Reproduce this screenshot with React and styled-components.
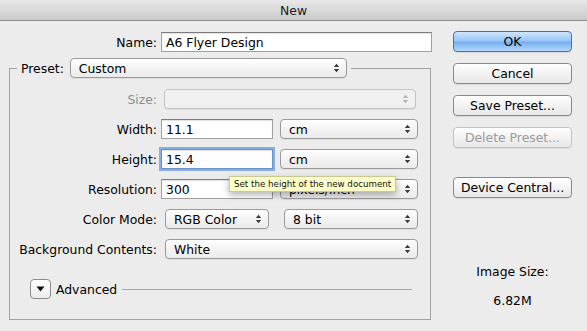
import React from 'react';
import styled, { createGlobalStyle, css } from 'styled-components';

const GlobalStyle = createGlobalStyle`
  html, body {
    margin: 0;
    padding: 0;
    background: #ececec;
  }
  body {
    font-family: "DejaVu Sans", "Liberation Sans", sans-serif;
    font-size: 12.4px;
    color: #000;
  }
`;

const Window = styled.div`
  width: 587px;
  height: 331px;
  background: #ececec;
  display: flex;
  flex-direction: column;
  overflow: hidden;
`;

const TitleBar = styled.div`
  flex: 0 0 20px;
  background: linear-gradient(#e8e8e8, #cacaca);
  border-bottom: 1px solid #8e8e8e;
  display: flex;
  align-items: center;
  justify-content: center;
  color: #1c1c1c;
`;

const Body = styled.div`
  display: flex;
  gap: 22px;
  padding: 10px 15px 0 9px;
`;

const FormColumn = styled.div`
  width: 422px;
  display: flex;
  flex-direction: column;
`;

const Row = styled.div`
  position: relative;
  display: grid;
  grid-template-columns: ${p => p.labelWidth || 147}px 1fr;
  column-gap: 4px;
  align-items: center;
  height: 20px;
  margin-top: ${p => p.top || 0}px;
`;

const Label = styled.span`
  text-align: right;
  white-space: nowrap;
  color: ${p => (p.disabled ? '#8e8e8e' : '#000')};
`;

const Controls = styled.div`
  display: flex;
  align-items: center;
  height: 20px;
`;

const TextField = styled.div`
  box-sizing: border-box;
  height: 20px;
  width: ${p => (p.width ? `${p.width}px` : 'auto')};
  flex: ${p => (p.width ? '0 0 auto' : '1')};
  background: #fff;
  border: 1px solid #a0a0a0;
  border-top-color: #7c7c7c;
  box-shadow: inset 0 1px 1px rgba(0, 0, 0, 0.12);
  padding: 0 4px;
  display: flex;
  align-items: center;
  white-space: nowrap;
  ${p =>
    p.focused &&
    css`
      border-color: #6f90c4;
      box-shadow: 0 0 0 2px #83aee6, inset 0 1px 1px rgba(0, 0, 0, 0.12);
    `}
`;

const PopUp = styled.div`
  box-sizing: border-box;
  height: 20px;
  width: ${p => (p.width ? `${p.width}px` : 'auto')};
  flex: ${p => (p.width ? '0 0 auto' : '1')};
  margin-left: ${p => p.left || 0}px;
  margin-right: ${p => p.right || 0}px;
  border: 1px solid ${p => (p.disabled ? '#c4c4c4' : '#9a9a9a')};
  border-radius: 4px;
  background: ${p =>
    p.disabled ? '#f0f0f0' : 'linear-gradient(#ffffff, #f3f3f3 50%, #ebebeb)'};
  box-shadow: 0 1px 0 rgba(0, 0, 0, 0.06);
  display: flex;
  align-items: center;
  justify-content: space-between;
  padding: 0 6px 0 8px;
  white-space: nowrap;
  overflow: hidden;
`;

const Arrows = ({ disabled }) => (
  <svg width="7" height="10" viewBox="0 0 7 10">
    <path
      d="M3.5 0.8 L6.2 4 H0.8 Z M3.5 9.2 L6.2 6 H0.8 Z"
      fill={disabled ? '#b4b4b4' : '#3a3a3a'}
    />
  </svg>
);

const Select = ({ value, disabled, ...rest }) => (
  <PopUp disabled={disabled} {...rest}>
    <span>{value}</span>
    <Arrows disabled={disabled} />
  </PopUp>
);

const Fieldset = styled.fieldset`
  box-sizing: border-box;
  width: 422px;
  margin: 6px 0 0;
  padding: 11px 12px 20px 0;
  border: 1px solid #a3a3a3;
  min-width: 0;
`;

const Legend = styled.legend`
  margin-left: 7px;
  padding: 0 4px;
`;

const LegendInner = styled.div`
  display: flex;
  align-items: center;
  gap: 6px;
  height: 20px;
`;

const FieldRows = styled.div`
  display: flex;
  flex-direction: column;
  gap: 10px;
`;

const Tooltip = styled.div`
  position: absolute;
  left: 219px;
  top: 27px;
  z-index: 3;
  height: 16px;
  box-sizing: border-box;
  padding: 0 4px;
  background: #ffffc8;
  border: 1px solid #c9c996;
  box-shadow: 0 3px 7px rgba(0, 0, 0, 0.3);
  font-size: 8.7px;
  display: flex;
  align-items: center;
  white-space: nowrap;
  color: #111;
`;

const AdvancedRow = styled.div`
  display: flex;
  align-items: center;
  height: 20px;
  margin: 20px 6px 0 20px;
`;

const Disclosure = styled.div`
  box-sizing: border-box;
  width: 21px;
  height: 20px;
  border: 1px solid #8c8c8c;
  border-radius: 4px;
  background: linear-gradient(#ffffff, #ececec);
  display: flex;
  align-items: center;
  justify-content: center;
  margin-right: 5px;
`;

const Rule = styled.div`
  flex: 1;
  height: 1px;
  background: #a6a6a6;
  margin-left: 5px;
`;

const ButtonColumn = styled.div`
  width: 119px;
  display: flex;
  flex-direction: column;
  padding-top: 0;
`;

const Button = styled.div`
  box-sizing: border-box;
  height: 21px;
  margin-top: ${p => p.top || 0}px;
  border: 1px solid ${p => (p.disabled ? '#c2c2c2' : '#8a8a8a')};
  border-radius: 4px;
  background: linear-gradient(#ffffff, #f2f2f2 50%, #e8e8e8);
  box-shadow: 0 1px 0 rgba(0, 0, 0, 0.07);
  color: ${p => (p.disabled ? '#9c9c9c' : '#000')};
  display: flex;
  align-items: center;
  justify-content: center;
  white-space: nowrap;
  ${p =>
    p.primary &&
    css`
      border-color: #52709f;
      background: linear-gradient(#cfe5fc, #99c6f6 45%, #76afef 55%, #b4d9fb);
    `}
`;

const SizeInfo = styled.div`
  margin-top: 66px;
  display: flex;
  flex-direction: column;
  align-items: center;
  gap: 14px;
  line-height: 15px;
`;

export default function App() {
  return (
    <Window>
      <GlobalStyle />
      <TitleBar>New</TitleBar>
      <Body>
        <FormColumn>
          <Row labelWidth={148} top={1}>
            <Label>Name:</Label>
            <Controls>
              <TextField style={{ marginRight: '-1px' }}>A6 Flyer Design</TextField>
            </Controls>
          </Row>

          <Fieldset>
            <Legend>
              <LegendInner>
                <Label>Preset:</Label>
                <Select value="Custom" width={277} />
              </LegendInner>
            </Legend>

            <FieldRows>
              <Row>
                <Label disabled>Size:</Label>
                <Controls>
                  <Select value="" disabled left={3} right={2} />
                </Controls>
              </Row>
              <Row>
                <Label>Width:</Label>
                <Controls>
                  <TextField width={112}>11.1</TextField>
                  <Select value="cm" left={7} />
                </Controls>
              </Row>
              <Row>
                <Label>Height:</Label>
                <Controls>
                  <TextField width={112} focused>
                    15.4
                  </TextField>
                  <Select value="cm" left={7} />
                </Controls>
                <Tooltip>Set the height of the new document</Tooltip>
              </Row>
              <Row>
                <Label>Resolution:</Label>
                <Controls>
                  <TextField width={112}>300</TextField>
                  <Select value="pixels/inch" left={7} />
                </Controls>
              </Row>
              <Row>
                <Label>Color Mode:</Label>
                <Controls>
                  <Select value="RGB Color" width={104} left={4} />
                  <Select value="8 bit" left={15} />
                </Controls>
              </Row>
              <Row>
                <Label>Background Contents:</Label>
                <Controls>
                  <Select value="White" left={4} />
                </Controls>
              </Row>
            </FieldRows>

            <AdvancedRow>
              <Disclosure>
                <svg width="9" height="6" viewBox="0 0 9 6">
                  <path d="M0.5 0.5 H8.5 L4.5 5.5 Z" fill="#111" />
                </svg>
              </Disclosure>
              <span>Advanced</span>
              <Rule />
            </AdvancedRow>
          </Fieldset>
        </FormColumn>

        <ButtonColumn>
          <Button primary top={0}>OK</Button>
          <Button top={11}>Cancel</Button>
          <Button top={11}>Save Preset...</Button>
          <Button top={11} disabled>Delete Preset...</Button>
          <Button top={29}>Device Central...</Button>
          <SizeInfo>
            <span>Image Size:</span>
            <span>6.82M</span>
          </SizeInfo>
        </ButtonColumn>
      </Body>
    </Window>
  );
}
